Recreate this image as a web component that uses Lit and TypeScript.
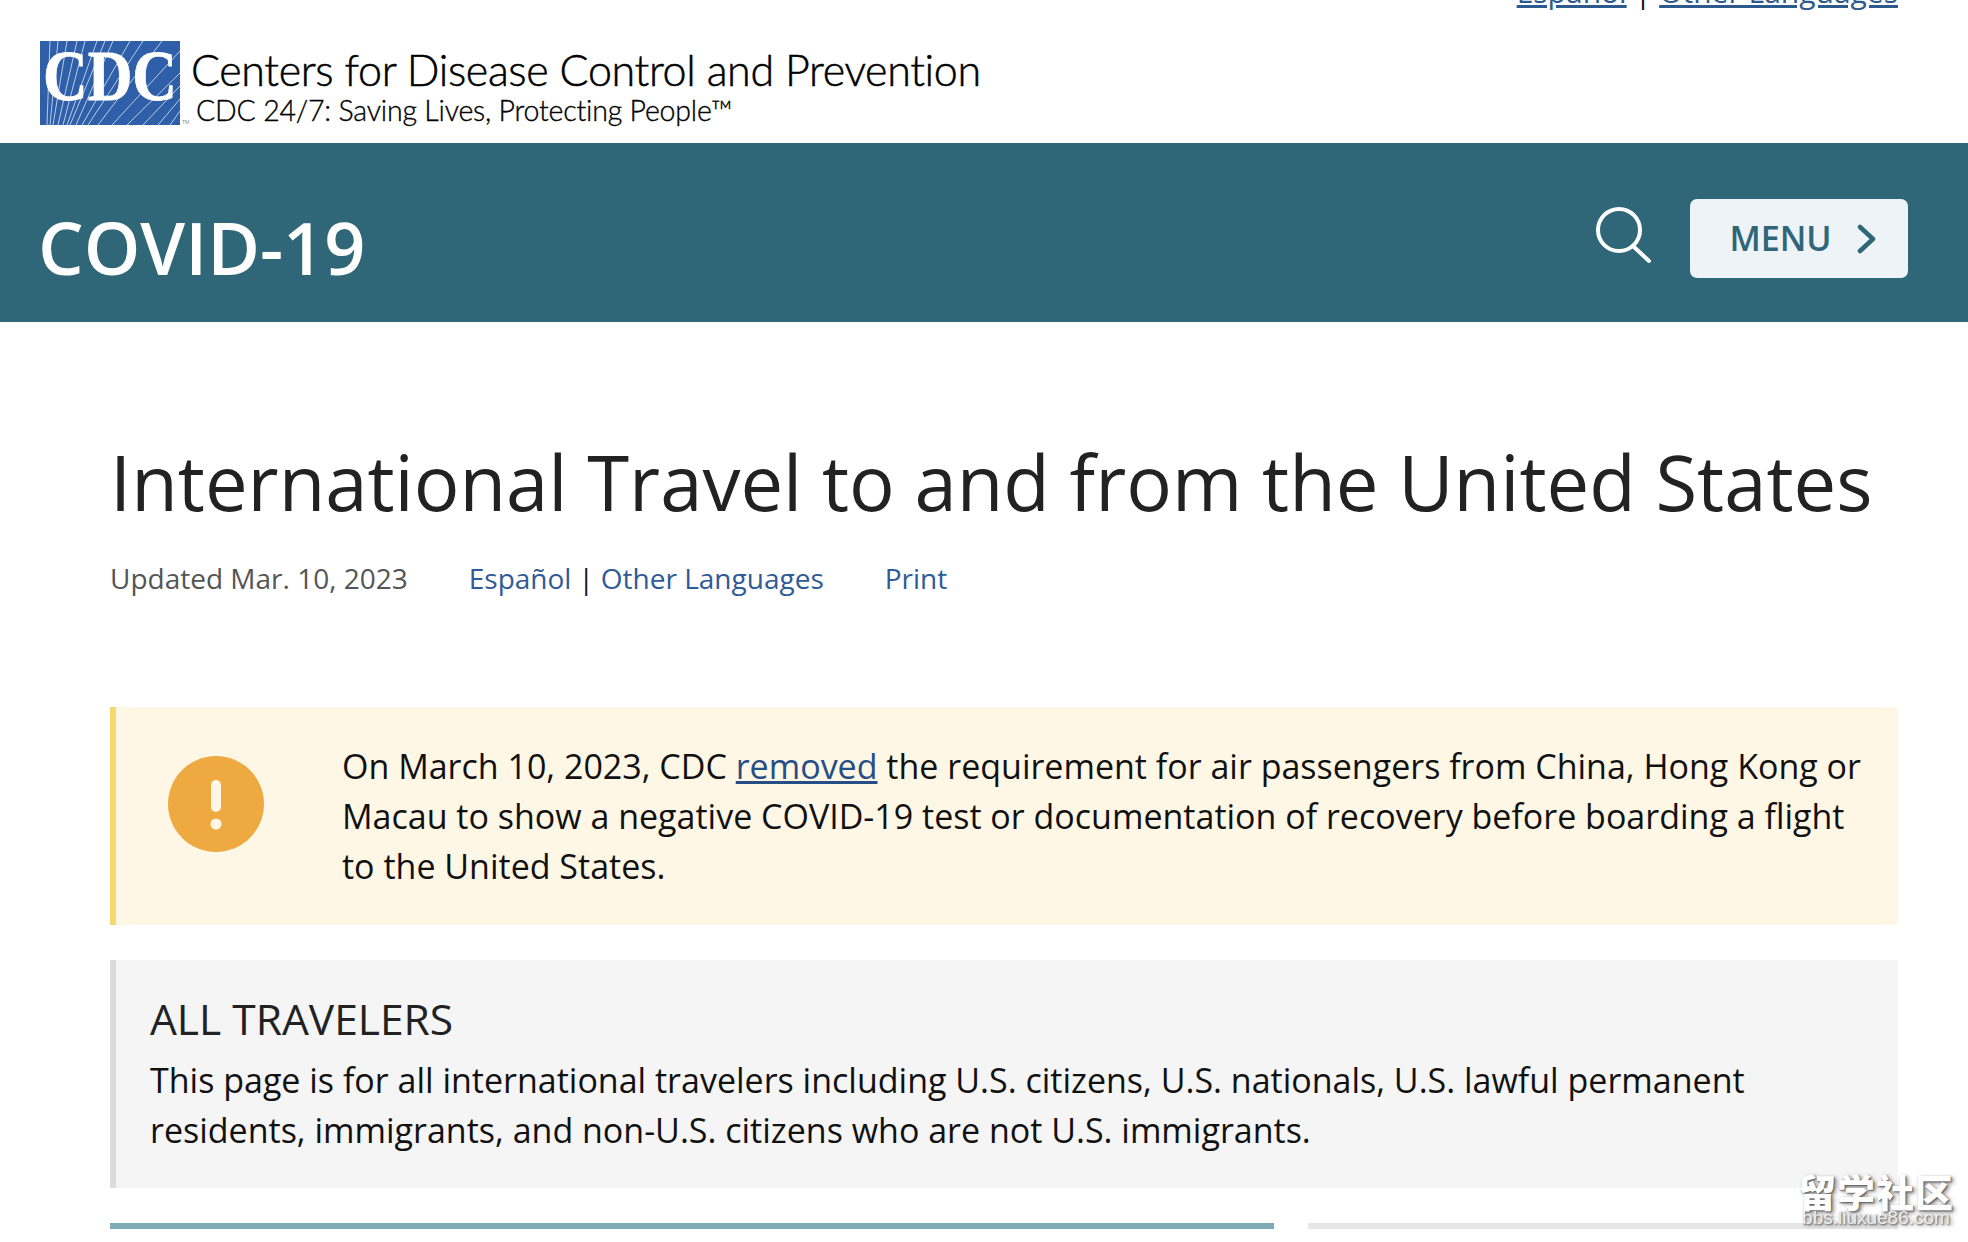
import { LitElement, html, css, svg } from "lit";
import { customElement } from "lit/decorators.js";

@customElement("app-root")
export class AppRoot extends LitElement {
  static styles = css`
    :host { display: block; width: 1968px; height: 1242px; overflow: hidden; position: relative; background: #fff; font-family: "Open Sans", sans-serif; color: #111; }
    .top { height: 143px; box-sizing: border-box; position: relative; overflow: hidden; }
    .toplang { display: flex; justify-content: flex-end; align-items: flex-end; gap: 8px; height: 12px; padding-right: 70px; font-size: 30px; line-height: 40px; color: #111; white-space: nowrap; }
    .toplang a { color: #2d5a8c; text-decoration: underline; }
    .brand { display: flex; gap: 11px; padding: 29px 0 0 40px; }
    .logowrap { position: relative; width: 140px; height: 84px; }
    .logo { width: 140px; height: 84px; display: block; }
    .tm { position: absolute; left: 142px; bottom: 0; font-size: 5px; line-height: 6px; color: #888; font-family: "Liberation Sans", sans-serif; }
    .names { display: flex; flex-direction: column; white-space: nowrap; color: #000; font-family: "Lato", sans-serif; font-weight: 300; }
    .n1 { font-size: 43px; line-height: 50px; letter-spacing: -0.36px; margin-top: 4px; -webkit-text-stroke: 0.5px #000; }
    .n2 { font-size: 28.5px; line-height: 34px; letter-spacing: -0.2px; margin-left: 5px; margin-top: -2px; -webkit-text-stroke: 0.35px #000; }
    .band { height: 179px; background: #2f6678; display: flex; align-items: center; padding: 0 60px 0 38px; }
    .site { color: #fff; font-size: 72px; font-weight: 600; line-height: 1; flex: 1; margin-top: 28px; }
    .search { width: 60px; height: 60px; margin-right: 35px; margin-top: 6px; display: block; }
    .menu { width: 218px; height: 79px; box-sizing: border-box; background: #edf3f6; border-radius: 7px; display: flex; align-items: center; justify-content: center; gap: 25px; padding-left: 8px; color: #2f6678; font-size: 34px; font-weight: 600; margin-top: 12px; line-height: 46px; }
    .menu span { margin-top: -2px; }
    .menu svg { width: 20px; height: 30px; display: block; }
    .main { padding: 0 70px 0 110px; }
    h1 { margin: 0; padding-top: 105px; font-size: 76px; font-weight: 400; line-height: 110px; color: #222; white-space: nowrap; }
    .meta { display: flex; font-size: 28px; line-height: 40px; margin-top: 21px; color: #111; white-space: nowrap; }
    .meta .upd { color: #555; margin-right: 61px; }
    .meta a { color: #2f5b96; }
    .meta .sep { margin: 0 7px; }
    .meta .print { margin-left: 61px; }
    .alert { margin-top: 109px; height: 218px; box-sizing: border-box; background: #fff7e5; border-left: 6px solid #f6d770; display: flex; align-items: center; padding-left: 52px; }
    .icon { width: 96px; height: 96px; flex: none; margin-right: 78px; display: block; margin-bottom: 24px; }
    .alert p { margin: 0; font-size: 34px; line-height: 50px; white-space: nowrap; }
    .alert a { color: #264e86; text-decoration: underline; }
    .info { margin-top: 35px; height: 228px; box-sizing: border-box; background: #f5f5f5; border-left: 6px solid #dcdcdc; padding: 32px 0 0 34px; }
    h2 { margin: 0; font-size: 42.5px; font-weight: 400; line-height: 54px; color: #222; }
    .info p { margin: 9px 0 0; font-size: 34px; line-height: 50px; white-space: nowrap; }
    .bars { display: grid; grid-template-columns: 1164px 1fr; gap: 34px; margin-top: 35px; }
    .bars div { height: 6px; }
    .b1 { background: #7eacb6; }
    .b2 { background: #e6e6e6; }
    .mark { position: absolute; left: 1794px; top: 1173px; width: 164px; text-align: center; color: #fff; text-shadow: 1px 1px 2px #555, 3px 2px 4px #999; font-family: "Noto Sans CJK SC", sans-serif; }
    .mark .m1 { font-size: 38px; font-weight: 900; line-height: 36px; letter-spacing: 1px; white-space: nowrap; }
    .mark .m2 { font-size: 19px; line-height: 18px; color: #eee; font-family: "Liberation Sans", sans-serif; white-space: nowrap; }
  `;

  private rays() {
    const tops = [[7, 10], [10, 18], [13, 27], [18, 37], [23, 45], [27, 57], [30, 65], [36, 73], [42, 90], [48, 103], [58, 122]];
    const sides = [[72, 10], [87, 32], [103, 45], [118, 58], [130, 70]];
    return [
      ...tops.map(([b, t]) => svg`<line x1=${b} y1="84" x2=${t} y2="0" stroke="#dfe8f5" stroke-width="0.8"></line>`),
      ...sides.map(([b, s]) => svg`<line x1=${b} y1="84" x2="140" y2=${s} stroke="#dfe8f5" stroke-width="0.8"></line>`),
    ];
  }

  render() {
    return html`
      <div class="top">
        <div class="toplang"><a>Español</a><span>|</span><a>Other Languages</a></div>
        <div class="brand">
          <div class="logowrap">
            <svg class="logo" viewBox="0 0 140 84">
              <rect width="140" height="84" fill="#2f5fa8"></rect>
              ${this.rays()}
              <text x="70" y="59" text-anchor="middle" fill="#fff" stroke="#fff" stroke-width="0.8" font-family="Liberation Serif" font-weight="700" font-size="72" textLength="134" lengthAdjust="spacingAndGlyphs">CDC</text>
            </svg>
            <span class="tm">TM</span>
          </div>
          <div class="names">
            <span class="n1">Centers for Disease Control and Prevention</span>
            <span class="n2">CDC 24/7: Saving Lives, Protecting People™</span>
          </div>
        </div>
      </div>
      <div class="band">
        <span class="site">COVID-19</span>
        <svg class="search" viewBox="0 0 60 60" fill="none" stroke="#fff" stroke-width="4" stroke-linecap="round">
          <circle cx="24" cy="24" r="21"></circle>
          <line x1="38" y1="40" x2="54" y2="55"></line>
        </svg>
        <div class="menu"><span>MENU</span>
          <svg viewBox="0 0 20 30" fill="none" stroke="#2f6678" stroke-width="4.5" stroke-linecap="round" stroke-linejoin="round"><path d="M3 3 L16 15 L3 27"></path></svg>
        </div>
      </div>
      <div class="main">
        <h1>International Travel to and from the United States</h1>
        <div class="meta">
          <span class="upd">Updated Mar. 10, 2023</span>
          <a>Español</a><span class="sep">|</span><a>Other Languages</a>
          <a class="print">Print</a>
        </div>
        <div class="alert">
          <svg class="icon" viewBox="0 0 96 96">
            <circle cx="48" cy="48" r="48" fill="#eeaa40"></circle>
            <rect x="43" y="24" width="10" height="32" rx="5" fill="#fff7e5"></rect>
            <circle cx="48" cy="68" r="5.5" fill="#fff7e5"></circle>
          </svg>
          <p>On March 10, 2023, CDC <a>removed</a> the requirement for air passengers from China, Hong Kong or<br>Macau to show a negative COVID-19 test or documentation of recovery before boarding a flight<br>to the United States.</p>
        </div>
        <div class="info">
          <h2>ALL TRAVELERS</h2>
          <p>This page is for all international travelers including U.S. citizens, U.S. nationals, U.S. lawful permanent<br>residents, immigrants, and non-U.S. citizens who are not U.S. immigrants.</p>
        </div>
        <div class="bars"><div class="b1"></div><div class="b2"></div></div>
      </div>
      <div class="mark"><div class="m1">留学社区</div><div class="m2">bbs.liuxue86.com</div></div>
    `;
  }
}
